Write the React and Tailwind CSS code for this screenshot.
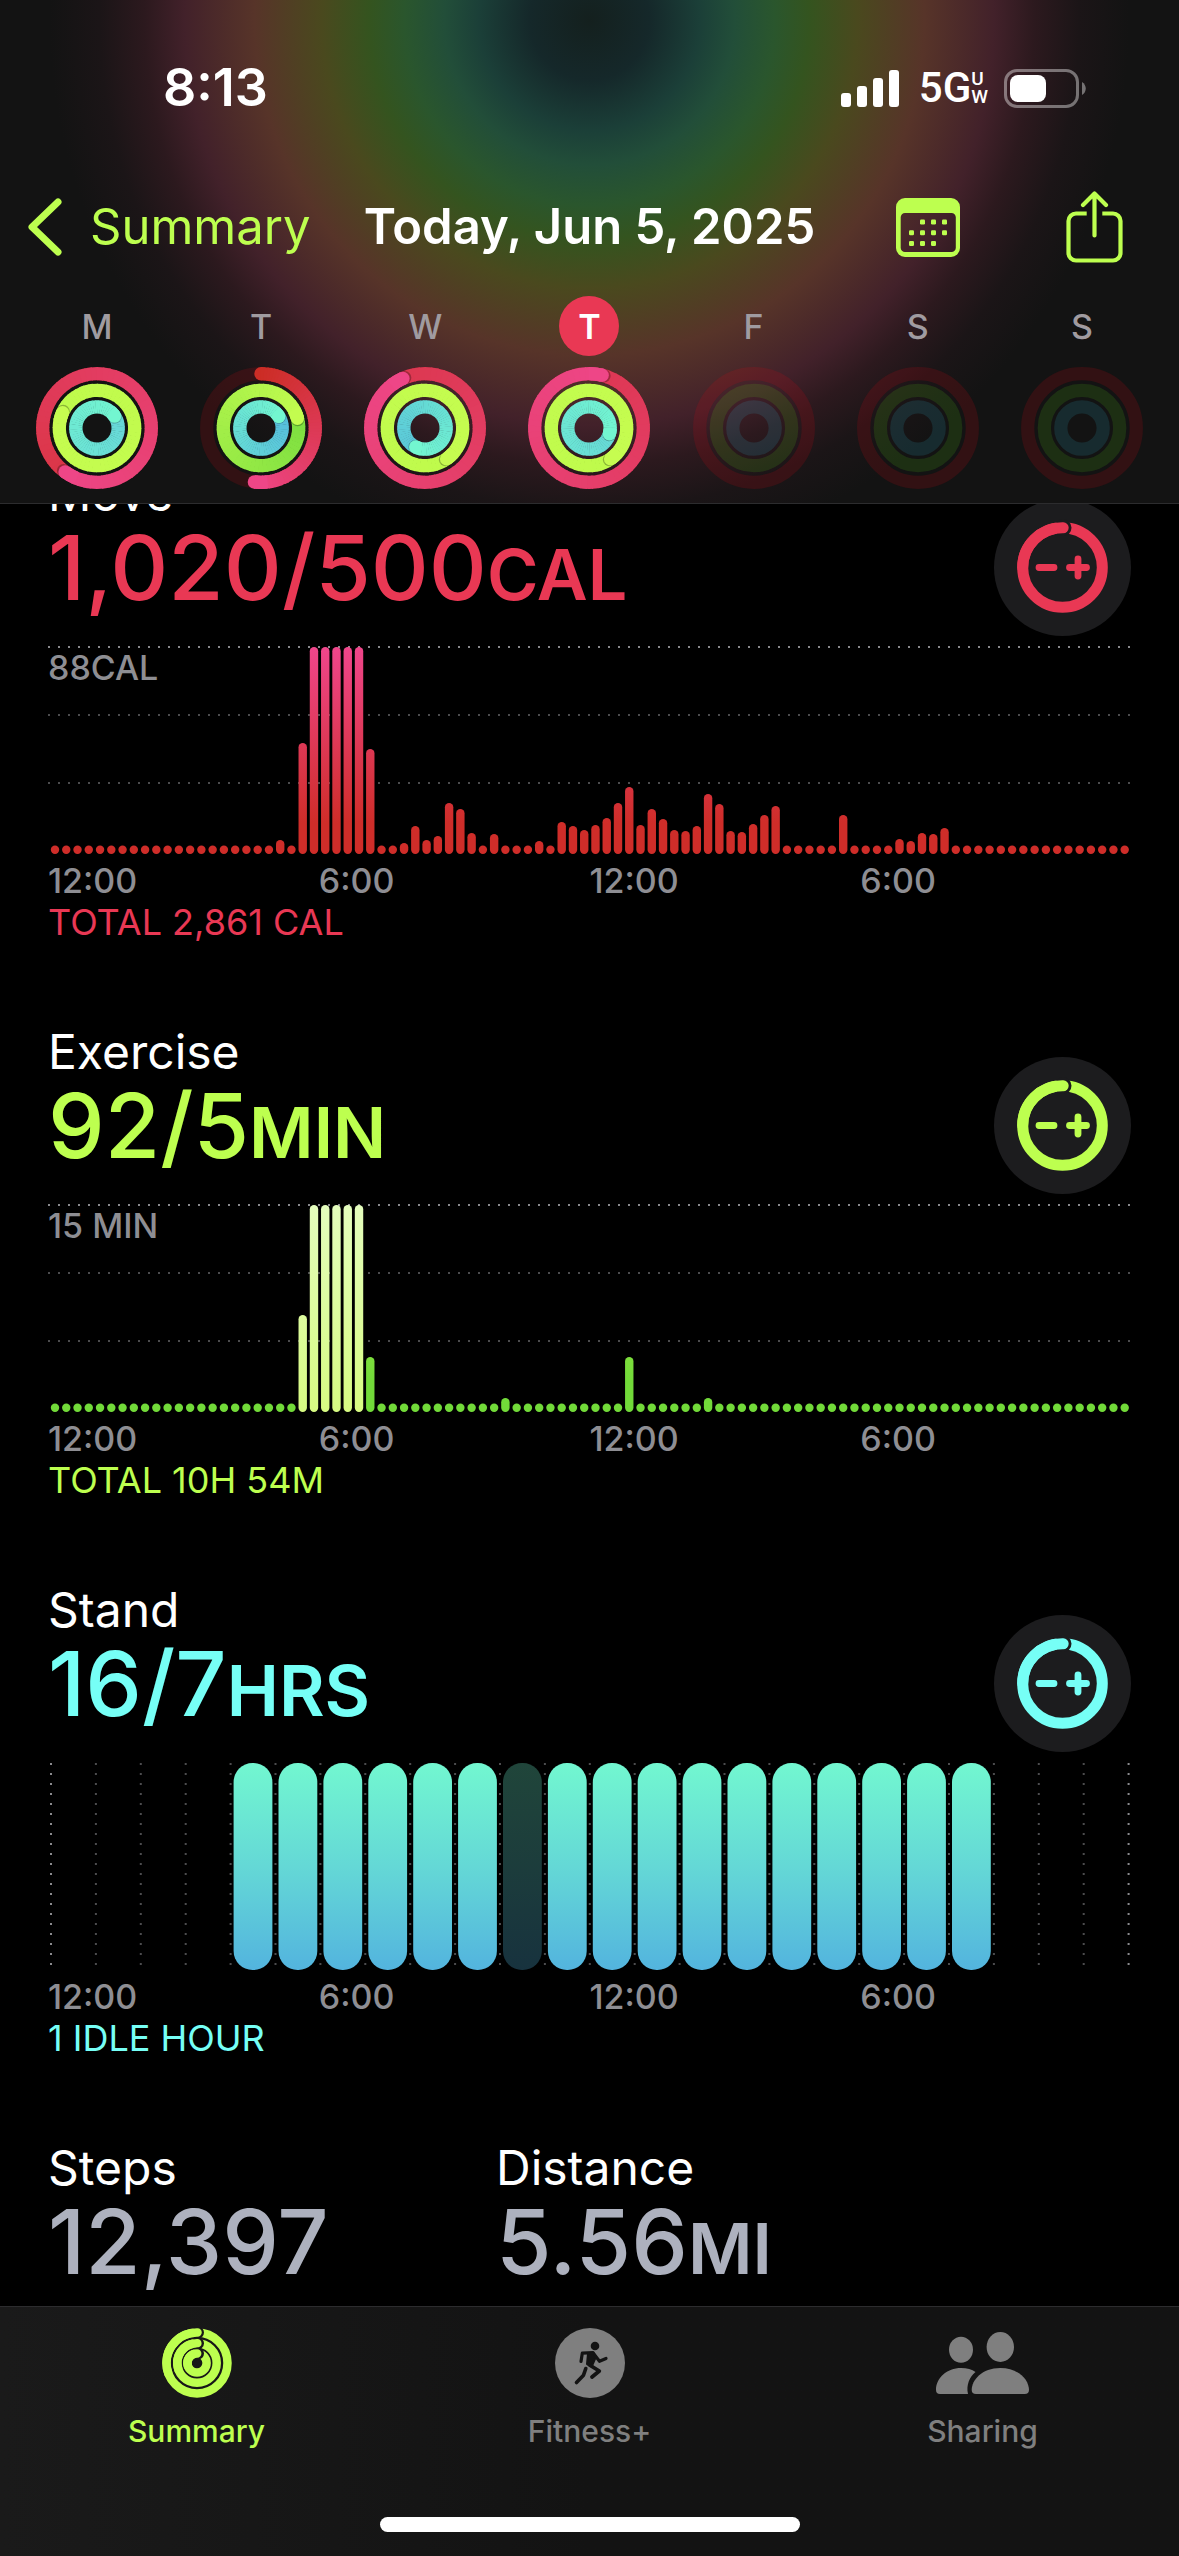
const LIME = '#bdff4f';

const DAYS = [
  {
    label: 'M',
    rings: [
      { end: 216, from: '#db3648', to: '#ee4687' },
      { end: 294, from: '#bffb4c', to: '#c6fc50' },
      { end: 56, from: '#66d6d8', to: '#73f6d0' },
    ],
  },
  {
    label: 'T',
    rings: [
      { end: 187, from: '#cc2d26', to: '#ee4687', partial: true },
      { end: 75, from: '#7ddf40', to: '#c3fc4f' },
      { end: 57, from: '#55bcdc', to: '#73f6d0' },
    ],
  },
  {
    label: 'W',
    rings: [
      { end: 336, from: '#dc3850', to: '#ee4687' },
      { end: 145, from: '#bffb4c', to: '#c6fc50' },
      { end: 206, from: '#5ac6d9', to: '#73f6d0' },
    ],
  },
  {
    label: 'T',
    today: true,
    rings: [
      { end: 14, from: '#de3854', to: '#ee4687' },
      { end: 145, from: '#bffb4c', to: '#c6fc50' },
      { end: 106, from: '#66d9d6', to: '#73f6d0' },
    ],
  },
  { label: 'F' },
  { label: 'S' },
  { label: 'S' },
];

const RING_RADII = [54.3, 37.7, 21.2];
const RING_TRACKS = ['rgba(230,10,20,0.15)', 'rgba(90,220,20,0.14)', 'rgba(50,190,220,0.14)'];

// quarter-hour buckets, anything missing is an empty bucket
const MOVE_BARS = {
  20: 14, 22: 111, 23: 207, 24: 207, 25: 207, 26: 207, 27: 207, 28: 105,
  31: 11, 32: 28, 33: 14, 34: 18, 35: 51, 36: 45, 37: 21, 39: 20, 43: 13,
  45: 32, 46: 28, 47: 24, 48: 29, 49: 36, 50: 51, 51: 67, 52: 29, 53: 45,
  54: 35, 55: 24, 56: 23, 57: 28, 58: 60, 59: 50, 60: 23, 61: 22, 62: 30,
  63: 39, 64: 48, 70: 39, 75: 15, 76: 13, 77: 21, 78: 20, 79: 26,
};

const EXERCISE_BARS = { 22: 97, 23: 207, 24: 207, 25: 207, 26: 207, 27: 207, 28: 55, 40: 14, 51: 55, 58: 14 };
const WORKOUT = [22, 23, 24, 25, 26, 27];

const STAND_HOURS = [4, 5, 6, 7, 8, 9, 10, 11, 12, 13, 14, 15, 16, 17, 18, 19, 20];
const IDLE_HOUR = 10;

function mix(from, to, t) {
  const channel = (hex, i) => parseInt(hex.slice(i, i + 2), 16);
  const parts = [1, 3, 5].map(i => Math.round(channel(from, i) + (channel(to, i) - channel(from, i)) * t));
  return `rgb(${parts.join(',')})`;
}

function point(cx, cy, r, deg) {
  const a = (deg * Math.PI) / 180;
  return [cx + r * Math.sin(a), cy - r * Math.cos(a)];
}

function arc(cx, cy, r, a, b) {
  const [x1, y1] = point(cx, cy, r, a);
  const [x2, y2] = point(cx, cy, r, b);
  return `M${x1} ${y1}A${r} ${r} 0 ${b - a > 180 ? 1 : 0} 1 ${x2} ${y2}`;
}

// SVG has no conic gradient, so the sweep is built from short arcs
function Ring({ r, end, from, to, partial }) {
  const start = partial ? 0 : end - 360;
  const steps = 60;
  const size = (end - start) / steps;
  const [sx, sy] = point(61, 61, r, start);
  const [ex, ey] = point(61, 61, r, end);
  const [shx, shy] = point(61, 61, r, end + 2);
  return (
    <g>
      {partial && <circle cx={sx} cy={sy} r="6.7" fill={from} />}
      {Array.from({ length: steps }, (_, i) => (
        <path
          key={i}
          d={arc(61, 61, r, start + i * size, start + (i + 1) * size + (i < steps - 1 ? 1 : 0))}
          stroke={mix(from, to, i / steps)}
          strokeWidth="13.3"
          fill="none"
        />
      ))}
      {!partial && <circle cx={shx} cy={shy} r="6.7" fill="rgba(0,0,0,0.28)" />}
      <circle cx={ex} cy={ey} r="6.7" fill={to} />
      <path d={arc(61, 61, r, end - 14, end)} stroke={to} strokeWidth="13.3" fill="none" />
    </g>
  );
}

function DayRings({ rings }) {
  return (
    <svg viewBox="0 0 122 122" className="mt-[11px] size-[122px]" aria-hidden="true">
      {RING_RADII.map((r, i) => (
        <g key={r}>
          <circle cx="61" cy="61" r={r} fill="none" stroke={RING_TRACKS[i]} strokeWidth="13.3" />
          {rings && <Ring r={r} {...rings[i]} />}
        </g>
      ))}
    </svg>
  );
}

function StatusBar() {
  return (
    <div className="flex items-center justify-between pl-[163px] pr-[93px] pt-[58px] text-white">
      <span className="text-[52px] leading-[60px] font-semibold">8:13</span>
      <div className="flex items-center">
        <svg viewBox="0 0 58 37" className="h-[37px] w-[58px]" fill="currentColor" aria-hidden="true">
          <rect x="0" y="23" width="10" height="14" rx="3" />
          <rect x="16" y="16" width="10" height="21" rx="3" />
          <rect x="32" y="8" width="10" height="29" rx="3" />
          <rect x="48" y="0" width="10" height="37" rx="3" />
        </svg>
        <span className="ml-5 flex items-center font-[Roboto] font-medium">
          <span className="text-[42px] leading-[40px]">5G</span>
          <span className="flex flex-col text-[19px] leading-[18px]">
            <span>U</span>
            <span>W</span>
          </span>
        </span>
        <svg viewBox="0 0 82 39" className="ml-4 h-[39px] w-[82px]" aria-hidden="true">
          <rect x="1.5" y="1.5" width="72" height="36" rx="11.5" fill="none" stroke="#fff" strokeOpacity="0.4" strokeWidth="3" />
          <rect x="6" y="6" width="36" height="27" rx="8" fill="#fff" />
          <path d="M78 13c5 3 5 10 0 13z" fill="#fff" fillOpacity="0.4" />
        </svg>
      </div>
    </div>
  );
}

function TitleBar() {
  return (
    <div className="mt-[73px] grid h-[72px] grid-cols-[1fr_auto_1fr] items-center text-[49px] leading-[60px]">
      <a href="#summary" className="flex items-center gap-[28px] pl-[28px] text-[#bdff4f]">
        <svg viewBox="0 0 34 58" className="h-[58px] w-[34px]" fill="none" stroke="currentColor" strokeWidth="7" strokeLinecap="round" strokeLinejoin="round" aria-hidden="true">
          <path d="M30 4 4 29l26 25" />
        </svg>
        Summary
      </a>
      <h1 className="font-semibold text-white">Today, Jun 5, 2025</h1>
      <div className="flex items-center justify-end gap-[106px] pr-[56px] text-[#bdff4f]">
        <button type="button" aria-label="Calendar">
          <svg viewBox="0 0 64 59" className="h-[59px] w-[64px]" fill="currentColor">
            <path fillRule="evenodd" d="M9 0h46a9 9 0 0 1 9 9v41a9 9 0 0 1-9 9H9a9 9 0 0 1-9-9V9a9 9 0 0 1 9-9zm0 15a4.300 4.300 0 0 0-4.300 4.300v30.400A4.300 4.300 0 0 0 9 54h46.500a4.300 4.300 0 0 0 4.300-4.300V19.300a4.300 4.300 0 0 0-4.300-4.300z" />
            {[[26.5, 24], [37.5, 24], [48.5, 24], [15.5, 34.7], [26.5, 34.7], [37.5, 34.7], [48.5, 34.7], [15.5, 45.4], [26.5, 45.4], [37.5, 45.4]].map(([x, y]) => (
              <rect key={`${x}-${y}`} x={x - 2.5} y={y - 2.5} width="5" height="5" rx="1.2" />
            ))}
          </svg>
        </button>
        <button type="button" aria-label="Share">
          <svg viewBox="0 0 57 72" className="h-[72px] w-[57px]" fill="none" stroke="currentColor" strokeWidth="4.2" strokeLinejoin="round">
            <path d="M20.700 22.500H10a7.500 7.500 0 0 0-7.500 7.500v32a7.500 7.500 0 0 0 7.500 7.500h37a7.500 7.500 0 0 0 7.500-7.500V30a7.500 7.500 0 0 0-7.500-7.500H36.300" />
            <path strokeLinecap="round" d="M28.500 2.500v42M17 14 28.500 2.500 40 14" />
          </svg>
        </button>
      </div>
    </div>
  );
}

function GoalButton({ color, label }) {
  return (
    <button type="button" aria-label={label} className="size-[137px] shrink-0 self-end rounded-full bg-[#1c1c1e]">
      <svg viewBox="-68.5 -68.5 137 137" className="size-full" fill="none" stroke={color}>
        <circle r="39.8" strokeWidth="11" />
        <circle cy="-39.8" r="8.5" cx="0.5" fill="#1c1c1e" stroke="none" />
        <path d={arc(0, 0, 39.8, 270, 361)} strokeWidth="11" strokeLinecap="round" />
        <path d="M-23.500 0h15M7 0h17M15.500-8.500v17" strokeWidth="6.8" strokeLinecap="round" />
      </svg>
    </button>
  );
}

function GridLines() {
  return (
    <g strokeWidth="2" strokeDasharray="2 8">
      <path d="M0 1H1083" stroke="#8a8a8e" />
      <path d="M0 69H1083M0 137H1083" stroke="#4c4c4e" />
    </g>
  );
}

function BarChart({ id, bars, top, bottom, highlight = [], label }) {
  return (
    <svg viewBox="0 0 1083 209" className="block w-full" role="img" aria-label={label}>
      <defs>
        <linearGradient id={id} gradientUnits="userSpaceOnUse" x1="0" y1="0" x2="0" y2="208">
          <stop offset="0" stopColor={top} />
          <stop offset="0.85" stopColor={bottom} />
        </linearGradient>
        <linearGradient id={`${id}-workout`} gradientUnits="userSpaceOnUse" x1="0" y1="0" x2="0" y2="208">
          <stop offset="0" stopColor="#e4fdbd" />
          <stop offset="1" stopColor="#d7fb82" />
        </linearGradient>
      </defs>
      <GridLines />
      {Array.from({ length: 96 }, (_, i) => {
        const h = bars[i] || 8.4;
        return (
          <rect
            key={i}
            x={2.8 + i * 11.26}
            y={208 - h}
            width="8.4"
            height={h}
            rx="4.2"
            fill={highlight.includes(i) ? `url(#${id}-workout)` : `url(#${id})`}
          />
        );
      })}
    </svg>
  );
}

function StandChart() {
  return (
    <svg viewBox="0 0 1083 209" className="block w-full" role="img" aria-label="Stand hours today">
      <defs>
        <linearGradient id="stand" x1="0" y1="0" x2="0" y2="1">
          <stop offset="0" stopColor="#72f7d0" />
          <stop offset="0.5" stopColor="#64d8d6" />
          <stop offset="1" stopColor="#53b4de" />
        </linearGradient>
      </defs>
      {Array.from({ length: 25 }, (_, i) => (
        <path
          key={i}
          d={`M${3 + i * 44.9} 1V204`}
          stroke={i === 0 || i === 24 ? '#8a8a8e' : '#4c4c4e'}
          strokeWidth="2"
          strokeDasharray="2 8"
        />
      ))}
      {STAND_HOURS.map(hour => (
        <rect
          key={hour}
          x={6 + hour * 44.9}
          y="1"
          width="38.8"
          height="207"
          rx="19"
          fill="url(#stand)"
          opacity={hour === IDLE_HOUR ? 0.28 : 1}
        />
      ))}
    </svg>
  );
}

function Metric({ title, value, unit, color }) {
  return (
    <div style={{ color }}>
      <h2 className="text-[48px] leading-[60px] text-white">{title}</h2>
      <p className="text-[90px] leading-[88px] font-medium">
        {value}
        {unit && <span className="text-[70px] font-semibold">{unit}</span>}
      </p>
    </div>
  );
}

function Section({ title, value, unit, color, scale, total, children }) {
  return (
    <section className="mb-[79px]">
      <div className="flex h-[172px] justify-between">
        <Metric title={title} value={value} unit={unit} color={color} />
        <GoalButton color={color} label={`Change ${title} goal`} />
      </div>
      <div className="relative mt-[10px]">
        {children}
        {scale && <span className="absolute top-[2px] left-0 text-[34px] leading-[40px] font-medium text-[#8e8e93]">{scale}</span>}
      </div>
      <div className="mt-[6px] grid grid-cols-4 text-[34px] leading-[40px] font-medium text-[#8e8e93]">
        <span>12:00</span>
        <span>6:00</span>
        <span>12:00</span>
        <span>6:00</span>
      </div>
      <p className="text-[36px] leading-[42px]" style={{ color }}>{total}</p>
    </section>
  );
}

function SummaryIcon() {
  return (
    <svg viewBox="-35 -35 70 70" className="size-[70px]" fill="none" stroke="currentColor" aria-hidden="true">
      {[30.5, 19.7, 9.6].map(r => (
        <g key={r}>
          <circle r={r} strokeWidth="8.5" />
          <circle cx="1" cy={-r} r="6" fill="#181818" stroke="none" />
          <path d={arc(0, 0, r, 250, 361)} strokeWidth="8.5" strokeLinecap="round" />
        </g>
      ))}
    </svg>
  );
}

function FitnessIcon() {
  return (
    <svg viewBox="0 0 70 70" className="size-[70px]" aria-hidden="true">
      <circle cx="35" cy="35" r="35" fill="currentColor" />
      <circle cx="40" cy="18" r="4.3" fill="#131313" />
      <g fill="none" stroke="#131313" strokeWidth="3.2" strokeLinecap="round" strokeLinejoin="round">
        <path d="M26 33.500 27.300 25.200 38 24.600" />
        <path d="M38.500 25.500 44.500 33.300 51 30.500" />
        <path d="M34.500 37 44.300 43 37 49" strokeWidth="3.8" />
        <path d="M30.800 40.500 28.500 47.200 21.500 54.500" strokeWidth="3.6" />
        <path d="M33 25.500h6l2 3-3 7-1 3-5-2.500z" fill="#131313" strokeWidth="2" />
      </g>
    </svg>
  );
}

function SharingIcon() {
  return (
    <svg viewBox="0 -4 93 70" className="h-[70px] w-[93px]" fill="currentColor" aria-hidden="true">
      <ellipse cx="25" cy="17.7" rx="12" ry="13" />
      <ellipse cx="64.3" cy="15" rx="13.7" ry="15" />
      <path d="M4 62Q0 62 0 58C0 46 11 36 25 36c6 0 11 1.500 14.500 4C33.500 45 30 53 32 62z" />
      <path d="M40 62q-4.300 0-4.300-4C35.700 48 46 36 64.300 36S93 48 93 58q0 4-4.300 4z" />
    </svg>
  );
}

function Tab({ href, label, icon, active }) {
  return (
    <a
      href={href}
      aria-current={active ? 'page' : undefined}
      className={`flex flex-1 flex-col items-center ${active ? 'text-[#bdff4f]' : 'text-[#7f7f7f]'}`}
    >
      {icon}
      <span className="mt-[13px] text-[30px] leading-[40px] font-medium">{label}</span>
    </a>
  );
}

export default function App() {
  return (
    <div className="flex min-h-screen flex-col bg-black font-[Inter,sans-serif]">
      <header className="border-b border-[#2c2c2e] bg-[radial-gradient(circle_at_50%_20px,#14201e_0px,#15282a_60px,#1b3f38_110px,#224e39_145px,#2a562d_185px,#34541f_220px,#4a491e_268px,#573429_335px,#42212a_405px,#2c191e_445px,#1b1517_490px,#131313_540px)] pb-[14px]">
        <StatusBar />
        <TitleBar />
        <div className="mt-[33px] flex px-[15px]">
          {DAYS.map((day, i) => (
            <button type="button" key={i} className="flex flex-1 flex-col items-center text-[34px] font-medium">
              <span className={`flex size-[60px] items-center justify-center rounded-full ${day.today ? 'bg-[#e93854] font-semibold text-white' : 'text-[#a09ba0]'}`}>
                {day.label}
              </span>
              <DayRings rings={day.rings} />
            </button>
          ))}
        </div>
      </header>

      <main className="flex-1 overflow-hidden px-12">
        {/* scrolled so the first heading is tucked under the header */}
        <div className="-mt-[40px]">
          <Section title="Move" value="1,020/500" unit="CAL" color="#e93854" scale="88CAL" total="TOTAL 2,861 CAL">
            <BarChart id="move" bars={MOVE_BARS} top="#f0468c" bottom="#cf2d29" label="Calories burned today" />
          </Section>
          <Section title="Exercise" value="92/5" unit="MIN" color={LIME} scale="15 MIN" total="TOTAL 10H 54M">
            <BarChart id="exercise" bars={EXERCISE_BARS} top="#bffb4c" bottom="#72da39" highlight={WORKOUT} label="Exercise minutes today" />
          </Section>
          <Section title="Stand" value="16/7" unit="HRS" color="#76fff6" total="1 IDLE HOUR">
            <StandChart />
          </Section>
          <div className="flex">
            <div className="w-[448px]">
              <Metric title="Steps" value="12,397" color="#adb1be" />
            </div>
            <Metric title="Distance" value="5.56" unit="MI" color="#adb1be" />
          </div>
        </div>
      </main>

      <nav className="border-t border-[#2c2c2e] bg-linear-to-r from-[#1a1a1a] to-[#131313] to-50% pt-[21px] pb-[24px]">
        <div className="flex">
          <Tab href="#summary" label="Summary" icon={<SummaryIcon />} active />
          <Tab href="#fitness" label="Fitness+" icon={<FitnessIcon />} />
          <Tab href="#sharing" label="Sharing" icon={<SharingIcon />} />
        </div>
        <div className="mx-auto mt-[66px] h-[15px] w-[420px] rounded-full bg-white" />
      </nav>
    </div>
  );
}
